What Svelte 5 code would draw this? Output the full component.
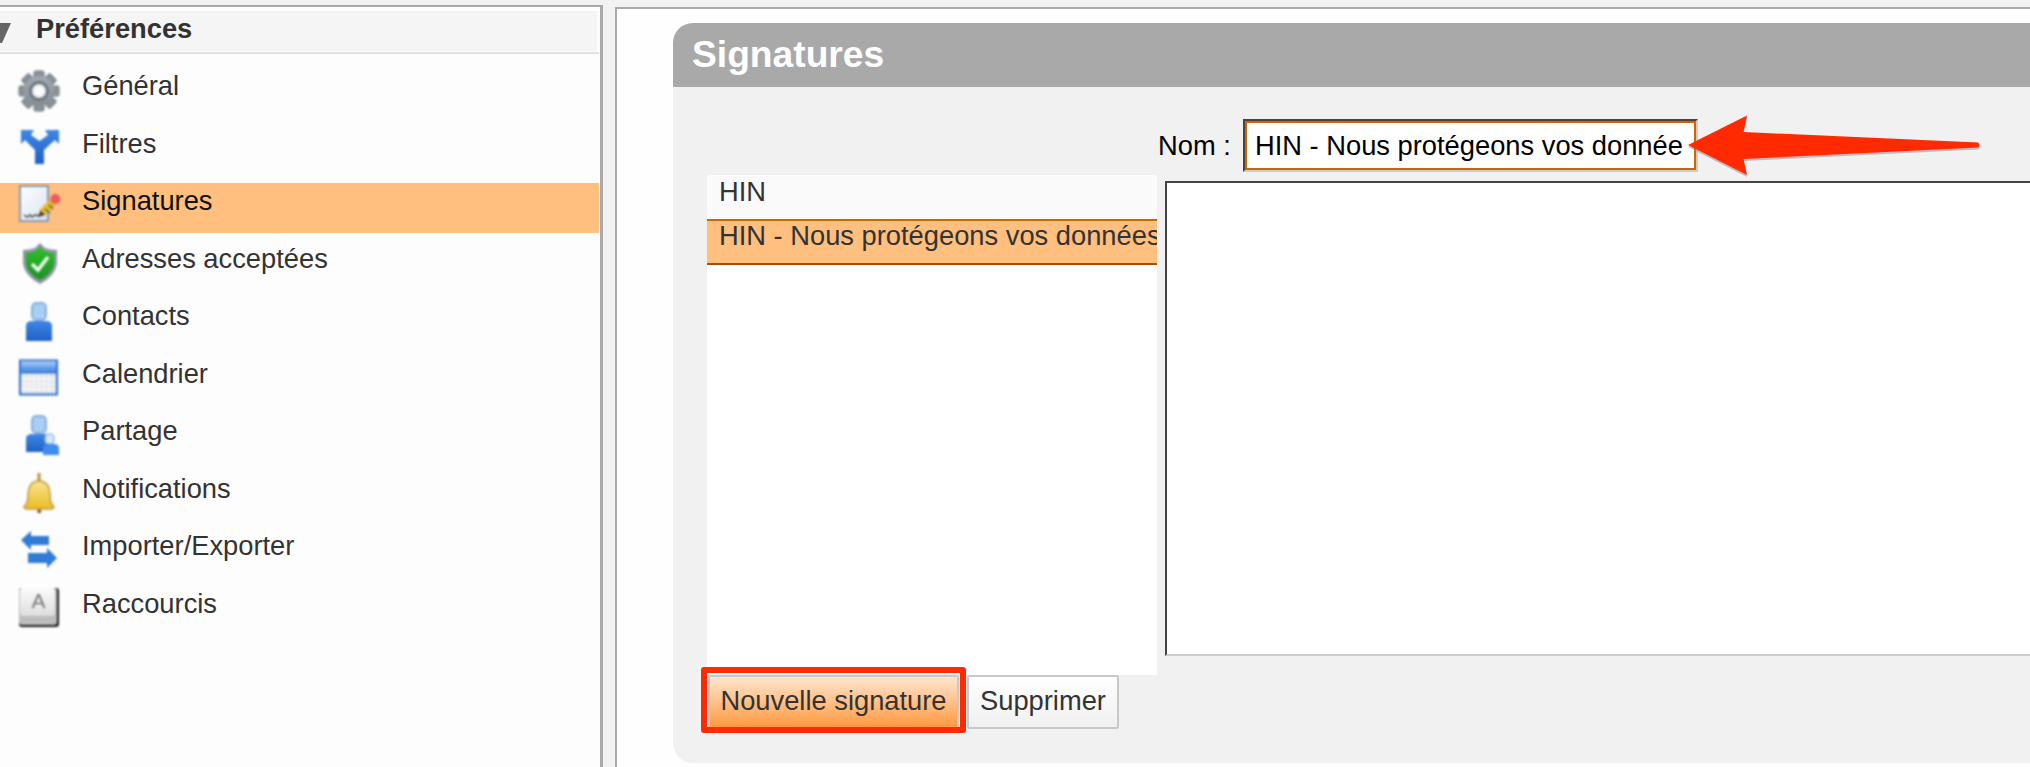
<script>
    const items = [
        { label: "Général", icon: gear },
        { label: "Filtres", icon: filter },
        { label: "Signatures", icon: signature, active: true },
        { label: "Adresses acceptées", icon: shield },
        { label: "Contacts", icon: contact },
        { label: "Calendrier", icon: calendar },
        { label: "Partage", icon: share },
        { label: "Notifications", icon: bell },
        { label: "Importer/Exporter", icon: arrows },
        { label: "Raccourcis", icon: shortcut }
    ];
    const teeth = [0, 45, 90, 135, 180, 225, 270, 315];
    const cells = [0, 1, 2, 3, 4, 5];
</script>

{#snippet gear()}
    {#each teeth as t}
        <rect x="17" y="2" width="10" height="10" rx="1.5" fill="#8a9299" stroke="#6f777e" transform="rotate({t} 22 22)" />
    {/each}
    <circle cx="22" cy="22" r="15" fill="url(#gearFill)" />
    <circle cx="22" cy="22" r="8.5" fill="#eef0f2" stroke="#6d757c" stroke-width="3" />
    <circle cx="22" cy="22" r="4" fill="#fdfdfd" />
{/snippet}

{#snippet filter()}
    <path d="M4 3 L17 3 L14 8 L22.5 14 L31 8 L28 3 L42 3 L42 17 L38 13 L27 23 L27 37 L18 37 L18 23 L8 13 L4 17 Z" fill="url(#blueFill)" />
{/snippet}

{#snippet signature()}
    <rect x="3" y="2" width="28" height="35" fill="url(#docFill)" stroke="#8599b3" stroke-width="2" />
    <path d="M7 31 L10 33 L13 31 L15 33 L18 31 L23 32" fill="none" stroke="#444" stroke-width="1.5" />
    <path d="M25 29 L37 17" stroke="#e9bb2a" stroke-width="8" />
    <path d="M28 25 L33 29 M32 21 L36 25" stroke="#555" stroke-width="1.5" />
    <path d="M21 33 L23.500 26.500 L28 31 Z" fill="#4a3c20" />
    <circle cx="38.500" cy="15" r="5" fill="#ee5a5e" />
{/snippet}

{#snippet shield()}
    <path d="M23 1 L28 6 Q34 8 40 8 L40 22 Q38 34 23 42 Q8 34 6 22 L6 8 Q12 8 18 6 Z" fill="#8a96a6" />
    <path d="M23 5 L27 9 Q32 11 37 11 L37 22 Q35 32 23 38 Q11 32 9 22 L9 11 Q14 11 19 9 Z" fill="url(#greenFill)" />
    <path d="M15 22 L21 28 L31 15" fill="none" stroke="#f2fbef" stroke-width="3.500" />
{/snippet}

{#snippet contact()}
    <rect x="15" y="4" width="14" height="17" rx="4" fill="#a9cff2" stroke="#6f9fd8" stroke-width="1.5" />
    <path d="M9 42 L9 27 Q9 22 15 22 L29 22 Q35 22 35 27 L35 42 Z" fill="url(#blueFill)" />
{/snippet}

{#snippet calendar()}
    <rect x="3" y="3.5" width="37" height="34" fill="#e4e6ea" stroke="#2e6fd0" stroke-width="2" />
    <rect x="4" y="4.5" width="35" height="10" fill="url(#bandFill)" />
    <rect x="4" y="14.5" width="35" height="2" fill="#2e6fd0" />
    {#each cells as c}
        <path d="M{7 + c * 5} 17 V36" stroke="#fff" stroke-width="1" />
    {/each}
    <path d="M4 22 H39 M4 27 H39 M4 32 H39" stroke="#fff" stroke-width="1" />
{/snippet}

{#snippet share()}
    <rect x="15" y="2" width="14" height="17" rx="4" fill="#a9cff2" stroke="#6f9fd8" stroke-width="1.5" />
    <path d="M9 38 L9 25 Q9 20 15 20 L29 20 Q35 20 35 25 L35 38 Z" fill="url(#blueFill)" />
    <rect x="28" y="20" width="9" height="10" rx="3" fill="#d5e5f6" stroke="#7ca9dc" />
    <path d="M26 41 L26 35 Q26 30 31 30 L37 30 Q42 30 42 35 L42 41 Z" fill="#3f8cee" />
{/snippet}

{#snippet bell()}
    <rect x="20.500" y="1" width="3" height="10" fill="#b8923a" />
    <rect x="20.500" y="36" width="3.500" height="5" fill="#84561c" />
    <path d="M11 24 Q11 9 22 9 Q33 9 33 24 Q33 31 37 35 Q37 37 34 37 L10 37 Q7 37 7 35 Q11 31 11 24 Z" fill="url(#bellFill)" stroke="#bf9a48" stroke-width="1.5" />
{/snippet}

{#snippet arrows()}
    <path d="M4 11 L14 2 L14 7 L32 7 L32 16 L14 16 L14 21 Z" fill="#2f7bd6" />
    <path d="M40 29 L30 39 L30 34 L11 34 L11 24 L30 24 L30 19 Z" fill="#2f7bd6" />
{/snippet}

{#snippet shortcut()}
    <rect x="2" y="1" width="40" height="39" rx="3" fill="#1c1c1c" />
    <rect x="2" y="1" width="38" height="37" rx="3" fill="#bcbcbc" />
    <rect x="3" y="1" width="35" height="28" rx="3" fill="url(#keyFill)" />
    <text x="21.500" y="21" text-anchor="middle" class="keycap">A</text>
{/snippet}

<svg class="defs" width="0" height="0" aria-hidden="true">
    <defs>
        <linearGradient id="gearFill" x1="0" y1="0" x2="0" y2="1"><stop offset="0" stop-color="#a2a9af" /><stop offset="1" stop-color="#858d94" /></linearGradient>
        <linearGradient id="blueFill" x1="0" y1="0" x2="0" y2="1"><stop offset="0" stop-color="#3f86e6" /><stop offset="1" stop-color="#1e62c4" /></linearGradient>
        <linearGradient id="docFill" x1="0" y1="0" x2="1" y2="1"><stop offset="0" stop-color="#ffffff" /><stop offset="1" stop-color="#d8e3f3" /></linearGradient>
        <linearGradient id="greenFill" x1="0" y1="0" x2="0" y2="1"><stop offset="0" stop-color="#2fc02a" /><stop offset="1" stop-color="#1e8f22" /></linearGradient>
        <linearGradient id="bandFill" x1="0" y1="0" x2="0" y2="1"><stop offset="0" stop-color="#a9cdf4" /><stop offset="1" stop-color="#3f86e6" /></linearGradient>
        <linearGradient id="bellFill" x1="0" y1="0" x2="0" y2="1"><stop offset="0" stop-color="#f8e58e" /><stop offset="1" stop-color="#ecbc22" /></linearGradient>
        <linearGradient id="keyFill" x1="0" y1="0" x2="0" y2="1"><stop offset="0" stop-color="#fbfbfb" /><stop offset="1" stop-color="#dedede" /></linearGradient>
    </defs>
</svg>

<div class="page">
    <aside class="sidebar">
        <div class="prefs-head">
            <svg class="caret" width="12" height="20" viewBox="0 0 12 20"><polygon points="0,0 11,0 2,20 0,20" fill="#666" /></svg>
            <span>Préférences</span>
        </div>
        <div class="rule"></div>
        <ul class="menu">
            {#each items as item}
                <li class:active={item.active}>
                    <svg class="icon" width="44" height="44" viewBox="0 0 44 44">{@render item.icon()}</svg>
                    <span>{item.label}</span>
                </li>
            {/each}
        </ul>
    </aside>

    <main class="content">
        <section class="card">
            <h1>Signatures</h1>
            <div class="card-body">
                <div class="name-row">
                    <label for="sig-name">Nom :</label>
                    <input id="sig-name" type="text" value="HIN - Nous protégeons vos données" />
                </div>
                <div class="editor-row">
                    <div class="sig-list">
                        <div class="sig-item">HIN</div>
                        <div class="sig-item selected">HIN - Nous protégeons vos données</div>
                    </div>
                    <textarea aria-label="Signature"></textarea>
                </div>
                <div class="buttons">
                    <div class="marked">
                        <button class="primary">Nouvelle signature</button>
                        <div class="red-box"></div>
                    </div>
                    <button>Supprimer</button>
                </div>
            </div>
        </section>
    </main>

    <svg class="arrow" width="2030" height="767" viewBox="0 0 2030 767" aria-hidden="true">
        <path d="M1688 145 L1747 115.500 L1743.500 132 L1978 142.500 Q1981 145 1978 147.500 L1743.500 159 L1747 175 Z" fill="#888" opacity="0.5" transform="translate(0 2)" />
        <path d="M1688 145 L1747 115.500 L1743.500 132 L1978 142.500 Q1981 145 1978 147.500 L1743.500 159 L1747 175 Z" fill="#ff2a00" />
    </svg>
</div>

<style>
    :global(body) {
        margin: 0;
        background: #f2f2f2;
    }
    .defs {
        position: absolute;
    }
    .page {
        position: relative;
        display: flex;
        gap: 12px;
        height: 767px;
        overflow: hidden;
        background: #f2f2f2;
        font-family: "Liberation Sans", Arial, sans-serif;
        font-size: 27.3px;
        color: #333;
    }
    .sidebar {
        box-sizing: border-box;
        flex: none;
        width: 603px;
        margin-top: 5px;
        background: #fdfdfd;
        border-top: 2px solid #aaa;
        border-right: 3px solid #aaa;
    }
    .prefs-head {
        display: flex;
        align-items: center;
        gap: 24px;
        width: 597px;
        height: 40px;
        margin-top: 4px;
        background: #f5f5f5;
        font-weight: bold;
        line-height: 36px;
    }
    .prefs-head span {
        margin-top: -4px;
    }
    .caret {
        flex: none;
        margin-top: 4px;
    }
    .rule {
        width: 599px;
        height: 2px;
        margin-top: 1px;
        background: #e2e2e2;
    }
    .menu {
        margin: 0;
        padding: 14px 0 0;
        list-style: none;
    }
    .menu li {
        display: flex;
        align-items: flex-start;
        width: 599px;
        height: 50px;
        margin-bottom: 7.55px;
        line-height: 36px;
    }
    .menu li.active {
        background: #ffbf7f;
        color: #111;
    }
    .icon {
        flex: none;
        margin: 1px 21px 0 17px;
        filter: blur(0.8px);
        overflow: visible;
    }
    .keycap {
        font-family: "Liberation Sans", Arial, sans-serif;
        font-size: 21px;
        fill: #777;
    }
    .content {
        flex: 1;
        min-width: 0;
        margin-top: 7px;
        padding: 14px 0 0 56px;
        background: #fefefe;
        border-top: 2px solid #aaa;
        border-left: 2px solid #aaa;
    }
    .card {
        height: 740px;
        background: #f1f1f1;
        border-radius: 20px 0 0 20px;
        overflow: hidden;
    }
    h1 {
        box-sizing: border-box;
        height: 64px;
        margin: 0;
        padding-left: 19px;
        background: #a9a9a9;
        color: #fff;
        font-size: 37.2px;
        line-height: 62px;
    }
    .card-body {
        padding-top: 32px;
    }
    .name-row {
        display: flex;
        align-items: center;
        height: 53px;
        margin-left: 485px;
        color: #000;
    }
    label {
        width: 85px;
    }
    input {
        box-sizing: border-box;
        width: 455px;
        height: 53px;
        padding: 0 13px 0 10px;
        background: #fff;
        border: 2px solid;
        border-color: #444 #ccc #ccc #444;
        box-shadow: inset 0 0 0 2px #cc6600;
        color: #000;
        font: inherit;
        outline: none;
    }
    .editor-row {
        display: flex;
        align-items: flex-start;
        margin-top: 3px;
    }
    .sig-list {
        flex: none;
        width: 450px;
        height: 500px;
        margin-left: 34px;
        background: #fff;
        overflow: hidden;
    }
    .sig-item {
        box-sizing: border-box;
        height: 44px;
        padding-left: 12px;
        background: #fafafa;
        line-height: 33px;
        white-space: nowrap;
    }
    .sig-item.selected {
        height: 46px;
        background: #ffbf7f;
        border-top: 2px solid #cc6600;
        border-bottom: 2px solid #a55000;
        line-height: 30px;
    }
    textarea {
        box-sizing: border-box;
        flex: 1;
        min-width: 0;
        height: 475px;
        margin: 6px 0 0 8px;
        background: #fff;
        border: solid;
        border-width: 2px 0 2px 2px;
        border-color: #444 #ccc #ccc #444;
        outline: none;
        resize: none;
    }
    .buttons {
        display: flex;
        gap: 8px;
        margin-left: 35px;
    }
    .marked {
        position: relative;
        display: flex;
    }
    button {
        box-sizing: border-box;
        width: 152px;
        height: 54px;
        padding: 0 0 2px;
        background: linear-gradient(#ffffff, #f0f0f0);
        border: 2px solid #c8c8c8;
        border-radius: 2px;
        color: #333;
        font: inherit;
    }
    button.primary {
        width: 251px;
        background: linear-gradient(#ffe6d0, #ff9a40);
    }
    .red-box {
        position: absolute;
        top: -8px;
        right: -7px;
        bottom: -4px;
        left: -7px;
        border: 6px solid #ff2a00;
        border-radius: 3px;
    }
    .arrow {
        position: absolute;
        top: 0;
        left: 0;
        pointer-events: none;
    }
</style>
